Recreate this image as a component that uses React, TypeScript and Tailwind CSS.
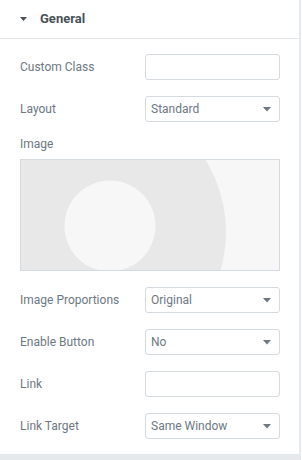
import React from 'react';

const Caret: React.FC = () => (
  <svg width="8" height="5" viewBox="0 0 8 5" className="shrink-0">
    <path d="M0 0 L8 0 L4 4.5 Z" fill="#6d7882" />
  </svg>
);

const Row: React.FC<{ label: string; children: React.ReactNode }> = ({ label, children }) => (
  <div className="flex items-center">
    <div className="w-[125px] shrink-0 text-[12px] leading-[15px] text-[#6d7882]">{label}</div>
    {children}
  </div>
);

const TextBox: React.FC = () => (
  <div className="w-[135px] shrink-0 h-[26px] rounded-[3px] border border-[#d5dadf] bg-white" />
);

const Select: React.FC<{ value: string }> = ({ value }) => (
  <div className="w-[135px] shrink-0 h-[26px] rounded-[3px] border border-[#d5dadf] bg-white flex items-center justify-between pl-[5px] pr-[8px]">
    <span className="text-[12px] text-[#6d7882]">{value}</span>
    <Caret />
  </div>
);

const Placeholder: React.FC = () => (
  <div className="h-[112px] w-[260px] border border-[#d5dadf] bg-[#f7f7f7] overflow-hidden">
    <svg width="258" height="110" viewBox="0 0 258 110">
      <circle cx="68" cy="72" r="137" fill="#e8e8e8" />
      <circle cx="89" cy="66" r="45.5" fill="#f7f7f7" />
      <rect x="108" y="106" width="30" height="6" fill="#e8e8e8" />
    </svg>
  </div>
);

export default function App() {
  return (
    <div className="w-[302px] h-[460px] flex bg-white" style={{ fontFamily: 'Roboto, "Liberation Sans", sans-serif' }}>
      <div className="w-[299px] shrink-0 flex flex-col">
        <div className="h-[39px] border-b border-[#e6e9ec] flex items-center pl-5">
          <svg width="7" height="4" viewBox="0 0 7 4" className="mr-[13px]">
            <path d="M0 0 L7 0 L3.5 4 Z" fill="#495157" />
          </svg>
          <span className="text-[13px] font-bold text-[#495157]">General</span>
        </div>
        <div className="flex flex-col gap-4 pl-5 pr-[19px] pt-[15px] pb-[15px]">
          <Row label="Custom Class"><TextBox /></Row>
          <Row label="Layout"><Select value="Standard" /></Row>
          <div className="flex flex-col gap-[7px] -mt-[1px]">
            <div className="text-[12px] leading-[15px] text-[#6d7882]">Image</div>
            <Placeholder />
          </div>
          <Row label="Image Proportions"><Select value="Original" /></Row>
          <Row label="Enable Button"><Select value="No" /></Row>
          <Row label="Link"><TextBox /></Row>
          <Row label="Link Target"><Select value="Same Window" /></Row>
        </div>
        <div className="flex-1 bg-[#e6e9ec]" />
      </div>
      <div className="w-[2px] shrink-0 bg-[#e6e9ec]" />
    </div>
  );
}
